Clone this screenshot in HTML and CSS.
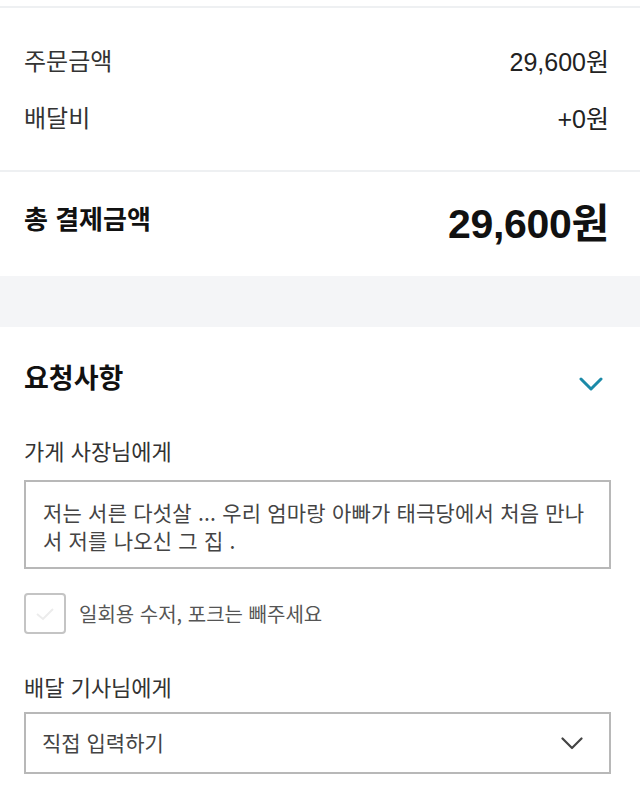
FILE: index.html
```html
<!DOCTYPE html>
<html lang="ko">
<head>
<meta charset="utf-8">
<link rel="stylesheet" href="styles.css">
</head>
<body>
<div class="page">
  <div class="top-edge"></div>
  <section class="amounts">
    <div class="row"><span class="label">주문금액</span><span class="value">29,600원</span></div>
    <div class="row"><span class="label">배달비</span><span class="value">+0원</span></div>
  </section>
  <section class="total">
    <span class="total-label">총 결제금액</span>
    <span class="total-value">29,600원</span>
  </section>
  <div class="band"></div>
  <section class="request">
    <div class="req-head">
      <h2 class="req-title">요청사항</h2>
      <svg class="req-chevron" width="24" height="14" viewBox="0 0 24 14"><path d="M2 2 L12 12 L22 2" fill="none" stroke="#1b8aa8" stroke-width="3" stroke-linecap="round" stroke-linejoin="round"/></svg>
    </div>
    <div class="field-label first">가게 사장님에게</div>
    <div class="textbox">저는 서른 다섯살 ... 우리 엄마랑 아빠가 태극당에서 처음 만나<br>서 저를 나오신 그 집 .</div>
    <label class="check">
      <span class="box"><svg width="22" height="16" viewBox="0 0 22 16"><path d="M3 8 L9 13 L19 3" fill="none" stroke="#ececec" stroke-width="2"/></svg></span>
      <span class="check-text">일회용 수저, 포크는 빼주세요</span>
    </label>
    <div class="field-label second">배달 기사님에게</div>
    <div class="select">
      <span class="select-text">직접 입력하기</span>
      <svg width="22" height="14" viewBox="0 0 22 14"><path d="M1.5 1.5 L11 11 L20.5 1.5" fill="none" stroke="#444" stroke-width="2.2" stroke-linecap="round" stroke-linejoin="round"/></svg>
    </div>
  </section>
</div>
</body>
</html>
```

FILE: styles.css
```css
* { box-sizing: border-box; }
html, body { margin: 0; padding: 0; background: #fff; }
body {
  font-family: "Noto Sans CJK KR", "Noto Sans", sans-serif;
  color: #222;
  width: 640px;
  overflow: hidden;
}
.page { width: 640px; }
.top-edge { height: 8px; border-bottom: 2px solid #eef0f2; }
.amounts { padding: 25px 31px 23px 24px; border-bottom: 2px solid #eef0f2; }
.row {
  display: flex;
  justify-content: space-between;
  align-items: center;
  height: 57px;
}
.label { font-size: 24px; color: #333; line-height: 32px; margin-bottom: 4px; }
.value {
  font-family: "Liberation Sans", "Noto Sans CJK KR", sans-serif;
  font-size: 25px;
  color: #222;
  line-height: 32px;
}
.total {
  height: 104px;
  display: flex;
  justify-content: space-between;
  align-items: center;
  padding: 0 31px 0 24px;
}
.total-label { font-size: 26px; font-weight: 700; color: #111; line-height: 36px; margin-bottom: 13px; }
.total-value {
  font-family: "Liberation Sans", "Noto Sans CJK KR", sans-serif;
  font-size: 41px;
  font-weight: 700;
  color: #111;
  line-height: 50px;
  letter-spacing: -0.3px;
}
.band { height: 51px; background: #f4f5f7; }
.request { padding: 31px 29px 20px 24px; }
.req-head { display: flex; justify-content: space-between; align-items: center; height: 38px; }
.req-title { margin: 0; font-size: 27px; font-weight: 700; color: #111; line-height: 38px; }
.req-chevron { margin-top: 14px; margin-right: 8px; }
.field-label { font-size: 22px; color: #333; line-height: 30px; }
.field-label.first { margin-top: 39px; }
.field-label.second { margin-top: 37px; }
.textbox {
  margin-top: 15px;
  width: 587px;
  height: 89px;
  border: 2px solid #b8b8b8;
  padding: 16px 17px;
  font-size: 21px;
  line-height: 28px;
  color: #444;
  letter-spacing: 0.2px;
  white-space: nowrap;
}
.check { display: flex; align-items: center; margin-top: 24px; height: 41px; }
.box {
  width: 42px; height: 41px;
  border: 2px solid #c4c4c4;
  border-radius: 4px;
  display: flex; align-items: center; justify-content: center;
}
.check-text { margin-left: 13px; font-size: 20px; color: #555; }
.select {
  margin-top: 11px;
  width: 587px;
  height: 62px;
  border: 2px solid #b8b8b8;
  display: flex;
  align-items: center;
  justify-content: space-between;
  padding: 0 26px 0 16px;
}
.select-text { font-size: 21px; color: #444; margin-bottom: 3px; }
.select svg { margin-top: 2px; }
```
